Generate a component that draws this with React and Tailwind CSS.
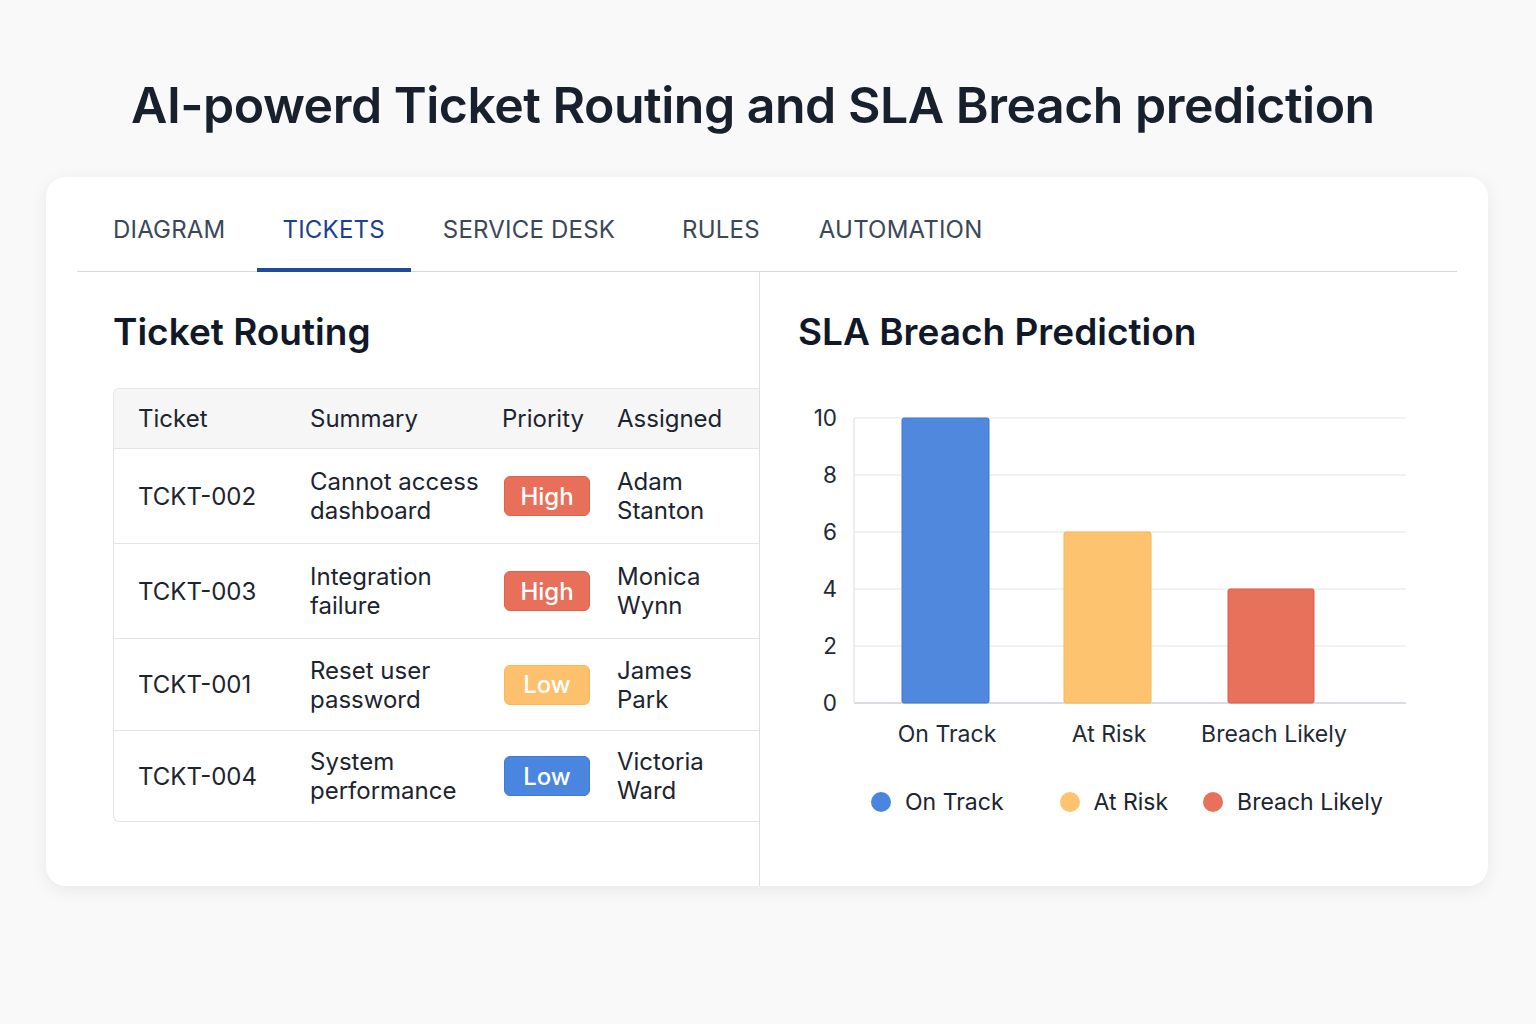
import React from 'react';

const tabs = [
  { label: 'DIAGRAM', ml: 'ml-[10px]' },
  { label: 'TICKETS', ml: 'ml-[5px]', active: true },
  { label: 'SERVICE DESK', ml: 'ml-[6px]' },
  { label: 'RULES', ml: 'ml-[15px]' },
  { label: 'AUTOMATION', ml: 'ml-[7px]' },
];

const tickets = [
  { id: 'TCKT-002', summary: ['Cannot access', 'dashboard'], priority: 'High', badge: 'bg-[#e8705a] border-[#e0624c]', who: ['Adam', 'Stanton'], h: 'h-[95px]' },
  { id: 'TCKT-003', summary: ['Integration', 'failure'], priority: 'High', badge: 'bg-[#e8705a] border-[#e0624c]', who: ['Monica', 'Wynn'], h: 'h-[95px]' },
  { id: 'TCKT-001', summary: ['Reset user', 'password'], priority: 'Low', badge: 'bg-[#fdc16d] border-[#fbb655]', who: ['James', 'Park'], h: 'h-[92px]' },
  { id: 'TCKT-004', summary: ['System', 'performance'], priority: 'Low', badge: 'bg-[#4a86df] border-[#3f7bd6]', who: ['Victoria', 'Ward'], h: 'h-[90px]' },
];

const bars = [
  { label: 'On Track', x: 104, w: 87, value: 10, fill: '#4f88dc', stroke: '#3a78d6', cx: 149 },
  { label: 'At Risk', x: 266, w: 87, value: 6, fill: '#fdc36f', stroke: '#f9b54d', cx: 311 },
  { label: 'Breach Likely', x: 430, w: 86, value: 4, fill: '#e8715c', stroke: '#e05a44', cx: 476 },
];

const legend = [
  { label: 'On Track', color: 'bg-[#4a86df]', ml: 'ml-[73px]' },
  { label: 'At Risk', color: 'bg-[#fdc36f]', ml: 'ml-[56px]' },
  { label: 'Breach Likely', color: 'bg-[#e8715c]', ml: 'ml-[35px]' },
];

const SlaChart = () => {
  const y0 = 303;
  const unit = 28.5;
  return (
    <svg width="620" height="360" className="block">
      {[0, 2, 4, 6, 8, 10].map((v) => (
        <g key={v}>
          <line x1="56" x2="608" y1={y0 - v * unit} y2={y0 - v * unit} stroke={v === 0 ? '#d9dce0' : '#eceef1'} strokeWidth={v === 0 ? 2 : 1.5} />
          <text x="39" y={y0 - v * unit + 2} textAnchor="end" dominantBaseline="middle" fontFamily="Inter, sans-serif" fontSize="22.5" fill="#1f2937">{v}</text>
        </g>
      ))}
      <line x1="56" x2="56" y1="18" y2={y0} stroke="#e5e7eb" strokeWidth="1.5" />
      {bars.map((b) => (
        <g key={b.label}>
          <rect x={b.x} y={y0 - b.value * unit} width={b.w} height={b.value * unit} rx="2" fill={b.fill} stroke={b.stroke} strokeWidth="1" />
          <text x={b.cx} y="336" textAnchor="middle" dominantBaseline="middle" fontFamily="Inter, sans-serif" fontSize="23" fill="#1f2937">{b.label}</text>
        </g>
      ))}
    </svg>
  );
};

const App = () => {
  return (
    <div className="min-h-[1024px] bg-[#f9f9fa] font-['Inter',sans-serif] pt-[74px]">
      <h1 className="pl-[131px] text-[50px] leading-[62px] font-semibold text-[#18202d] tracking-[-0.5px]">
        AI-powerd Ticket Routing and SLA Breach prediction
      </h1>

      <div className="ml-[46px] mr-[48px] mt-[41px] h-[709px] bg-white rounded-[20px] shadow-[0_4px_18px_rgba(0,0,0,0.07)] px-[31px] flex flex-col">
        <div className="flex h-[95px] items-end border-b border-[#d5d8dc]">
          {tabs.map((t) => (
            <div
              key={t.label}
              className={`${t.ml} px-[26px] h-full flex items-center pt-[14px] text-[24px] tracking-[0.2px] border-b-4 -mb-px ${t.active ? 'border-[#1e4c9a] text-[#1d3f8f]' : 'border-transparent text-[#3a4759]'}`}
            >
              {t.label}
            </div>
          ))}
        </div>

        <div className="flex flex-1">
          <div className="w-[683px] pl-[36px] border-r border-[#dcdfe3]">
            <h2 className="pt-[38px] text-[37px] leading-[44px] font-semibold text-[#111827]">Ticket Routing</h2>
            <div className="mt-[34px] border-l border-t border-b border-[#e3e5e8] rounded-l-[6px] text-[24px] text-[#1c2430]">
              <div className="grid grid-cols-[196px_192px_115px_1fr] h-[60px] items-center bg-[#f6f6f7] rounded-tl-[6px] border-b border-[#e3e5e8]">
                <div className="pl-[24px]">Ticket</div>
                <div>Summary</div>
                <div>Priority</div>
                <div>Assigned</div>
              </div>
              {tickets.map((t, i) => (
                <div
                  key={t.id}
                  className={`grid grid-cols-[196px_192px_115px_1fr] ${t.h} items-center leading-[29px] ${i < tickets.length - 1 ? 'border-b border-[#e3e5e8]' : ''}`}
                >
                  <div className="pl-[24px]">{t.id}</div>
                  <div>
                    <div>{t.summary[0]}</div>
                    <div>{t.summary[1]}</div>
                  </div>
                  <div>
                    <span className={`ml-[2px] inline-flex w-[86px] h-[40px] items-center justify-center rounded-[6px] border text-white font-medium ${t.badge}`}>
                      {t.priority}
                    </span>
                  </div>
                  <div>
                    <div>{t.who[0]}</div>
                    <div>{t.who[1]}</div>
                  </div>
                </div>
              ))}
            </div>
          </div>

          <div className="flex-1 pl-[38px]">
            <h2 className="pt-[38px] text-[37px] leading-[44px] font-semibold text-[#111827]">SLA Breach Prediction</h2>
            <div className="mt-[46px]">
              <SlaChart />
            </div>
            <div className="mt-[27px] flex items-center h-[30px] text-[23px] text-[#1c2430]">
              {legend.map((l) => (
                <div key={l.label} className={`${l.ml} flex items-center`}>
                  <span className={`w-[20px] h-[20px] rounded-full ${l.color}`}></span>
                  <span className="ml-[14px]">{l.label}</span>
                </div>
              ))}
            </div>
          </div>
        </div>
      </div>
    </div>
  );
};

export default App;
